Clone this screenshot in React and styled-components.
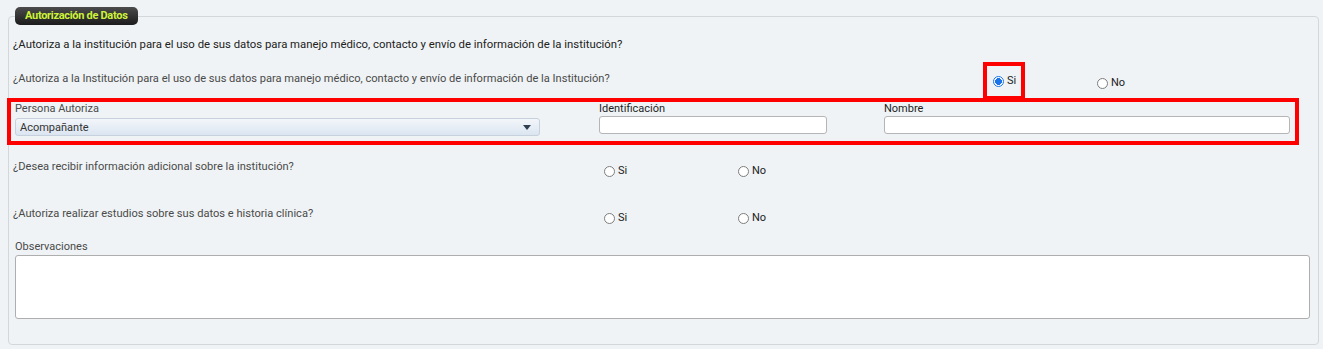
import React from "react";
import styled, { createGlobalStyle } from "styled-components";

const GlobalStyle = createGlobalStyle`
  html, body {
    margin: 0;
    padding: 0;
    background: #eff3f5;
  }
  body {
    padding-top: 7px;
    font-family: Roboto, "Liberation Sans", Arial, sans-serif;
    font-size: 11px;
    color: #333;
  }
`;

const Fieldset = styled.fieldset`
  box-sizing: border-box;
  margin: 0 4px 0 8px;
  padding: 0 6px 25px 4px;
  min-width: 0;
  height: 338px;
  border: 1px solid #d3d7da;
  border-radius: 4px;
  background: #eff3f5;
`;

const Legend = styled.legend`
  margin-left: 2px;
  padding: 0 10px;
  height: 18px;
  line-height: 18px;
  border-radius: 5px;
  background: linear-gradient(#4b4b4b, #1c1c1c);
  color: #cdf23a;
  font-weight: 700;
  font-size: 11px;
  letter-spacing: -0.3px;
`;

const Intro = styled.div`
  height: 36px;
  padding-top: 12px;
  box-sizing: border-box;
  line-height: 14px;
  font-size: 11.35px;
  color: #222;
`;

const QuestionRow = styled.div`
  display: grid;
  grid-template-columns: ${(p) => p.$columns};
  align-items: start;
  height: ${(p) => p.$height}px;
  padding-top: ${(p) => p.$pad}px;
  box-sizing: border-box;
`;

const Question = styled.span`
  line-height: 14px;
  font-size: 11.1px;
  color: #4a4a4a;
`;

const Highlight = styled.div`
  box-sizing: border-box;
  width: 42px;
  height: 38px;
  margin-top: ${(p) => p.$top}px;
  padding: 0 0 0 6px;
  border: 4px solid #ff0000;
  display: flex;
  align-items: center;
  position: relative;
  z-index: 1;
`;

const Option = styled.label`
  display: flex;
  align-items: center;
  gap: 3px;
  margin-top: ${(p) => p.$top || 0}px;
  line-height: 14px;
  color: #222;
`;

const Radio = styled.span`
  box-sizing: border-box;
  width: 11px;
  height: 11px;
  border-radius: 50%;
  border: 1px solid ${(p) => (p.$checked ? "#1a73e8" : "#7d7d7d")};
  background: ${(p) =>
    p.$checked ? "radial-gradient(circle, #1a73e8 0 3.2px, #fff 3.6px)" : "#fff"};
`;

const RedBox = styled.div`
  box-sizing: border-box;
  height: 47px;
  margin-left: -6px;
  margin-right: 13px;
  padding: 0 4px;
  border: 4px solid #ff0000;
  display: grid;
  grid-template-columns: 584px 285px 406px;
`;

const Field = styled.div`
  display: flex;
  flex-direction: column;
  width: ${(p) => p.$width}px;
`;

const Label = styled.span`
  line-height: 14px;
  color: ${(p) => (p.$dark ? "#1e1e1e" : "#4a4a4a")};
`;

const Select = styled.div`
  box-sizing: border-box;
  margin-top: 2px;
  height: 18px;
  padding: 0 8px 0 4px;
  border: 1px solid #c7d1dd;
  border-radius: 3px;
  background: linear-gradient(#f3f6fa, #dbe5f1);
  display: flex;
  align-items: center;
  justify-content: space-between;
  color: #333;
`;

const Caret = styled.span`
  width: 0;
  height: 0;
  border-left: 4px solid transparent;
  border-right: 4px solid transparent;
  border-top: 5px solid #2f3f52;
`;

const Input = styled.div`
  box-sizing: border-box;
  height: 18px;
  border: 1px solid #b5b5b5;
  border-radius: 3px;
  background: #fff;
`;

const Notes = styled.div`
  padding: 1px 0 0 2px;
`;

const TextArea = styled.div`
  box-sizing: border-box;
  margin-top: 1px;
  height: 64px;
  width: 1295px;
  border: 1px solid #aeaeae;
  border-radius: 3px;
  background: #fff;
`;

const YesNo = ({ checked }) => (
  <>
    <Option $top={4}>
      <Radio $checked={checked === "si"} />
      Si
    </Option>
    <Option $top={4}>
      <Radio $checked={checked === "no"} />
      No
    </Option>
  </>
);

export default function App() {
  return (
    <>
      <GlobalStyle />
      <Fieldset>
        <Legend>Autorización de Datos</Legend>
        <Intro>
          ¿Autoriza a la institución para el uso de sus datos para manejo médico,
          contacto y envío de información de la institución?
        </Intro>
        <QuestionRow $columns="970px 114px auto" $height={37} $pad={11}>
          <Question>
            ¿Autoriza a la Institución para el uso de sus datos para manejo
            médico, contacto y envío de información de la Institución?
          </Question>
          <Highlight $top={-10}>
            <Option>
              <Radio $checked />
              Si
            </Option>
          </Highlight>
          <Option $top={4}>
            <Radio />
            No
          </Option>
        </QuestionRow>
        <RedBox>
          <Field $width={525}>
            <Label>Persona Autoriza</Label>
            <Select>
              Acompañante
              <Caret />
            </Select>
          </Field>
          <Field $width={228}>
            <Label $dark>Identificación</Label>
            <Input />
          </Field>
          <Field $width={406}>
            <Label $dark>Nombre</Label>
            <Input />
          </Field>
        </RedBox>
        <QuestionRow $columns="591px 134px auto" $height={47} $pad={15}>
          <Question>¿Desea recibir información adicional sobre la institución?</Question>
          <YesNo />
        </QuestionRow>
        <QuestionRow $columns="591px 134px auto" $height={47} $pad={15}>
          <Question>¿Autoriza realizar estudios sobre sus datos e historia clínica?</Question>
          <YesNo />
        </QuestionRow>
        <Notes>
          <Label>Observaciones</Label>
          <TextArea />
        </Notes>
      </Fieldset>
    </>
  );
}
